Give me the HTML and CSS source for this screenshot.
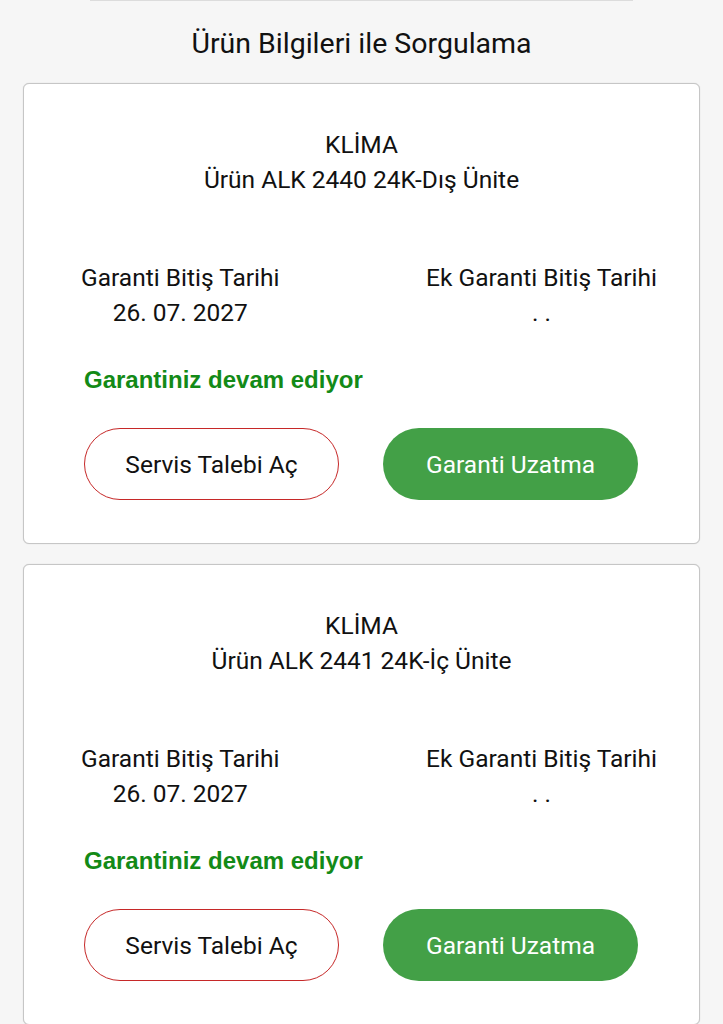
FILE: index.html
```html
<!DOCTYPE html>
<html lang="tr">
<head>
    <meta charset="UTF-8">
    <meta name="viewport" content="width=device-width, initial-scale=1.0">
    <title>Ürün Bilgileri ile Sorgulama</title>
    <link rel="stylesheet" href="styles.css">
</head>
<body>
    <div class="top-rule"></div>

    <h2 class="page-title">Ürün Bilgileri ile Sorgulama</h2>

    <!-- Product cards -->
    <div class="product-card">
        <div class="product-name">
            <div>KLİMA</div>
            <div>Ürün ALK 2440 24K-Dış Ünite</div>
        </div>
        <div class="warranty-dates">
            <div class="date-col">
                <div>Garanti Bitiş Tarihi</div>
                <div>26. 07. 2027</div>
            </div>
            <div class="date-col">
                <div>Ek Garanti Bitiş Tarihi</div>
                <div>. .</div>
            </div>
        </div>
        <div class="warranty-status">Garantiniz devam ediyor</div>
        <div class="card-actions">
            <button class="btn btn-outline">Servis Talebi Aç</button>
            <button class="btn btn-green">Garanti Uzatma</button>
        </div>
    </div>

    <div class="product-card">
        <div class="product-name">
            <div>KLİMA</div>
            <div>Ürün ALK 2441 24K-İç Ünite</div>
        </div>
        <div class="warranty-dates">
            <div class="date-col">
                <div>Garanti Bitiş Tarihi</div>
                <div>26. 07. 2027</div>
            </div>
            <div class="date-col">
                <div>Ek Garanti Bitiş Tarihi</div>
                <div>. .</div>
            </div>
        </div>
        <div class="warranty-status">Garantiniz devam ediyor</div>
        <div class="card-actions">
            <button class="btn btn-outline">Servis Talebi Aç</button>
            <button class="btn btn-green">Garanti Uzatma</button>
        </div>
    </div>
</body>
</html>
```

FILE: styles.css
```css
/* Page */
body {
    font-family: Roboto, "Liberation Sans", sans-serif;
    margin: 0;
    padding: 0;
    background-color: #f6f6f6;
    color: #111;
}
.top-rule {
    width: 543px;
    margin: 0 auto;
    height: 1px;
    background: #dcdcdc;
}
.page-title {
    margin: 25px 0 21px;
    text-align: center;
    font-size: 28.5px;
    font-weight: normal;
    line-height: 36px;
}

/* Card */
.product-card {
    margin: 0 23px 20px;
    padding: 43px 0 43px;
    background: #fff;
    border: 1px solid #c6c6c6;
    border-radius: 6px;
    box-shadow: 0 0 1px rgba(0,0,0,0.2);
    font-size: 24.5px;
    line-height: 35px;
}
.product-name {
    text-align: center;
}
.warranty-dates {
    display: flex;
    justify-content: space-between;
    margin-top: 63px;
    padding: 0 42px 0 57px;
}
.date-col {
    text-align: center;
}
.warranty-status {
    margin-top: 32px;
    padding-left: 60px;
    font-family: "Liberation Sans", Arial, sans-serif;
    font-size: 24px;
    font-weight: bold;
    color: #138a17;
}
.card-actions {
    display: flex;
    gap: 44px;
    margin-top: 31px;
    padding-left: 60px;
}

/* Buttons */
.btn {
    width: 255px;
    height: 72px;
    border-radius: 36px;
    font-family: Roboto, "Liberation Sans", sans-serif;
    font-size: 24.5px;
    box-sizing: border-box;
    cursor: pointer;
}
.btn-outline {
    background: #fff;
    color: #111;
    border: 1.5px solid #c62828;
}
.btn-green {
    background-color: #43a047;
    color: #fff;
    border: none;
}
```
